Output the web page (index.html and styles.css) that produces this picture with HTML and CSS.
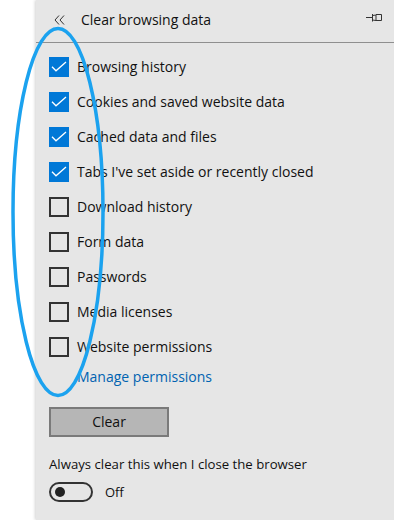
FILE: index.html
```html
<!DOCTYPE html>
<html>
<head>
<meta charset="utf-8">
<link rel="stylesheet" href="styles.css">
</head>
<body>
<div class="panel">
  <div class="header">
    <svg class="back" width="12" height="10" viewBox="0 0 12 10"><path d="M5 0.5 L1 5 L5 9.5 M10 0.5 L6 5 L10 9.5" fill="none" stroke="#333" stroke-width="1"/></svg>
    <span class="title">Clear browsing data</span>
    <svg class="pin" width="17" height="8" viewBox="0 0 17 8"><path d="M0 3.5 H6 M6.5 0 V7.5 M6.5 1.5 L10 1 V6.5 L6.5 6 M10 0.5 H15.5 V6.5 H10" fill="none" stroke="#333" stroke-width="1"/></svg>
  </div>
  <div class="list">
    <div class="row"><span class="cb on"><svg width="20" height="20" viewBox="0 0 20 20"><path d="M3 9.7 L7 13.8 L17 5" fill="none" stroke="#fff" stroke-width="1.3"/></svg></span><span class="label">Browsing history</span></div>
    <div class="row"><span class="cb on"><svg width="20" height="20" viewBox="0 0 20 20"><path d="M3 9.7 L7 13.8 L17 5" fill="none" stroke="#fff" stroke-width="1.3"/></svg></span><span class="label">Cookies and saved website data</span></div>
    <div class="row"><span class="cb on"><svg width="20" height="20" viewBox="0 0 20 20"><path d="M3 9.7 L7 13.8 L17 5" fill="none" stroke="#fff" stroke-width="1.3"/></svg></span><span class="label">Cached data and files</span></div>
    <div class="row"><span class="cb on"><svg width="20" height="20" viewBox="0 0 20 20"><path d="M3 9.7 L7 13.8 L17 5" fill="none" stroke="#fff" stroke-width="1.3"/></svg></span><span class="label">Tabs I've set aside or recently closed</span></div>
    <div class="row"><span class="cb"></span><span class="label">Download history</span></div>
    <div class="row"><span class="cb"></span><span class="label">Form data</span></div>
    <div class="row"><span class="cb"></span><span class="label">Passwords</span></div>
    <div class="row"><span class="cb"></span><span class="label">Media licenses</span></div>
    <div class="row"><span class="cb"></span><span class="label">Website permissions</span></div>
  </div>
  <div class="manage">Manage permissions</div>
  <div class="btn">Clear</div>
  <div class="always">Always clear this when I close the browser</div>
  <div class="toggle-row"><span class="toggle"><span class="knob"></span></span><span class="off">Off</span></div>
</div>
<svg class="annot" width="394" height="520" viewBox="0 0 394 520"><ellipse cx="58" cy="212" rx="45" ry="183.5" fill="none" stroke="#1ba2ef" stroke-width="3.5"/></svg>
</body>
</html>
```
FILE: styles.css
```css
html, body { margin: 0; padding: 0; }
body {
  width: 394px; height: 520px; overflow: hidden;
  background: #fff;
  font-family: "Open Sans", "Noto Sans", sans-serif;
  color: #111;
  position: relative;
}
.panel {
  margin-left: 36px;
  height: 520px;
  background: #e6e6e6;
  box-shadow: -1px 0 3px rgba(0,0,0,0.18);
}
.header {
  height: 42px;
  border-bottom: 1px solid #8f8f8f;
  display: flex;
  align-items: center;
}
.back { margin-left: 18px; margin-top: -3px; }
.title { margin-left: 15px; font-size: 14px; margin-top: -4px; }
.pin { margin-left: auto; margin-right: 11px; margin-top: -6px; }
.list { padding-top: 7px; }
.row { height: 35px; display: flex; align-items: flex-start; padding-left: 13px; }
.cb {
  width: 20px; height: 20px; box-sizing: border-box;
  border: 2px solid #333; margin-top: 7px; flex: none;
  display: block;
}
.cb.on { background: #0078d7; border: none; }
.cb svg { display: block; }
.label { margin-left: 8px; font-size: 14px; line-height: 20px; margin-top: 7px; }
.manage { margin-left: 41px; font-size: 14px; color: #0063b1; line-height: 20px; margin-top: 2px; }
.btn {
  margin-left: 13px; margin-top: 20px;
  width: 120px; height: 30px; box-sizing: border-box;
  background: #b6b6b6; border: 2px solid #7a7a7a;
  font-size: 14px; text-align: center; line-height: 26px;
}
.always { margin-left: 13px; margin-top: 17px; font-size: 13.2px; line-height: 20px; }
.toggle-row { display: flex; align-items: center; margin-left: 13px; margin-top: 8px; }
.toggle {
  width: 44px; height: 20px; box-sizing: border-box;
  border: 2px solid #333; border-radius: 10px;
  display: flex; align-items: center; padding-left: 4px;
}
.knob { width: 10px; height: 10px; border-radius: 50%; background: #222; }
.off { margin-left: 12px; font-size: 13px; }
.annot { position: absolute; left: 0; top: 0; pointer-events: none; }
```
